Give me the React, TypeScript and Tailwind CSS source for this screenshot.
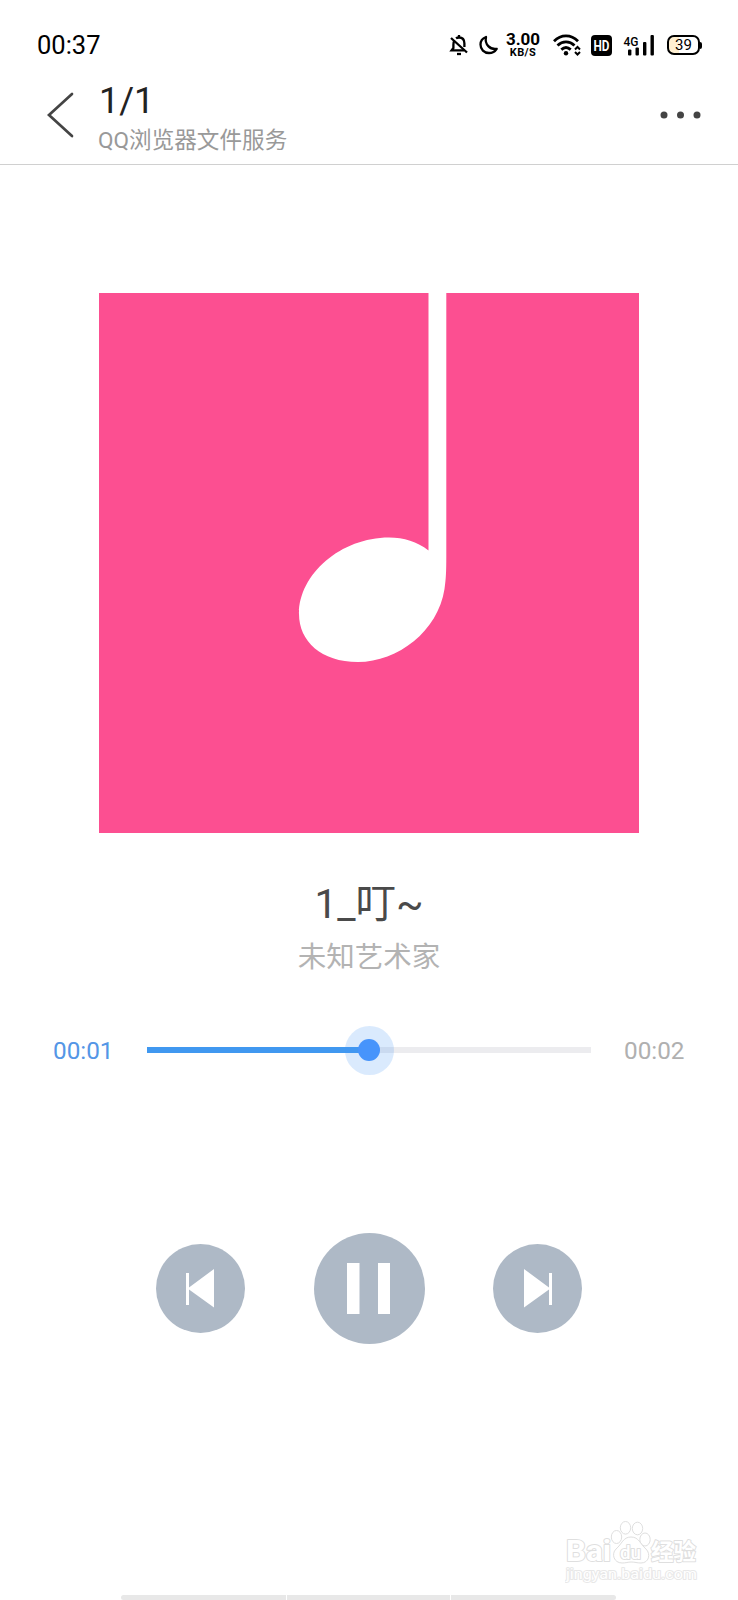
import React from "react";

function StatusBar() {
  return (
    <div className="flex h-[76px] items-start justify-between pl-[37px] pr-[36px] pt-[30px] text-black">
      <span className="text-[25.5px] leading-[30px]">00:37</span>
      <div className="flex h-[30px] items-center">
        <svg width="20" height="22" viewBox="0 0 20 22" fill="none" stroke="currentColor" strokeWidth="2.3">
          <path d="M5.5 6.4C4.7 7.5 4.4 9 4.4 10.8V14L2.6 16.4H15" />
          <path d="M7 4.4C7.8 3.8 8.8 3.5 10 3.5C13.5 3.5 15.4 6 15.4 9.5V13" />
          <path d="M10 1V4M2 4L18 18.5" />
          <path d="M8 20H12" />
        </svg>
        <svg className="ml-[10px]" width="20" height="20" viewBox="0 0 20 20" fill="none" stroke="currentColor" strokeWidth="2.3" strokeLinejoin="round">
          <path d="M7 2C3.5 3.3 1.5 6 1.5 9.5C1.5 14.5 5 18 10 18C13.5 18 16 16.5 17.7 13.8C11 14.8 5.5 9.5 7 2Z" />
        </svg>
        <div className="ml-[7px] flex w-[34px] flex-col items-center font-bold">
          <span className="text-[17px] leading-[15px]">3.00</span>
          <span className="text-[11px] leading-[11px] tracking-[0.4px]">KB/S</span>
        </div>
        <svg className="ml-[13px]" width="28" height="22" viewBox="0 0 28 22" fill="none" stroke="currentColor" strokeWidth="2.8">
          <path d="M1 7.2C8 .2 18 .2 25 7.2M4.5 11.5C9.5 6.7 16.5 6.7 21.5 11.5M8.3 15.6C11.2 13 14.8 13 17.7 15.6" />
          <circle cx="13" cy="19.2" r="2.2" fill="currentColor" stroke="none" />
          <path d="M22 15.5L24.5 13L27 15.5M22 18L24.5 20.5L27 18" strokeWidth="2" />
        </svg>
        <svg className="ml-[10px]" width="21" height="21" viewBox="0 0 21 21">
          <rect width="21" height="21" rx="4" fill="#000" />
          <text x="2.5" y="15.6" fontSize="14" fontWeight="700" fill="#fff" textLength="16" lengthAdjust="spacingAndGlyphs">HD</text>
        </svg>
        <svg className="ml-[12px] overflow-visible" width="32" height="22" viewBox="0 0 32 22" fill="currentColor">
          <text x="-0.5" y="11.5" fontSize="12.8" fontWeight="500" textLength="15" lengthAdjust="spacingAndGlyphs">4G</text>
          <rect x="4" y="15.5" width="3.4" height="6" rx="1" />
          <rect x="11.5" y="13.5" width="3.4" height="8" rx="1" />
          <rect x="19" y="8" width="3.4" height="13.5" rx="1" />
          <rect x="26.5" y="1" width="3.4" height="20.5" rx="1" />
        </svg>
        <div className="ml-[11px] flex items-center">
          <div className="flex h-[20px] w-[33px] items-center justify-center rounded-[7px] border-2 border-black bg-linear-to-r from-[#fff0d2] from-35% to-white to-35% pt-px text-[15px] leading-none">39</div>
          <div className="h-[7px] w-[2px] rounded-r-sm bg-black" />
        </div>
      </div>
    </div>
  );
}

function Header() {
  return (
    <header className="flex h-[89px] border-b border-[#d0d0d0] pl-[46px] pr-[37px]">
      <svg className="mt-[15px]" width="30" height="48" viewBox="0 0 30 48" fill="none" stroke="#444" strokeWidth="2.7" strokeLinecap="round">
        <path d="M26 3L3 24L26 45" />
      </svg>
      <div className="ml-[22px] flex flex-1 flex-col">
        <h1 className="ml-px mt-[4px] text-[36px] leading-[42px] text-[#222]">1/1</h1>
        <p className="mt-[4px] text-[22.6px] leading-[30px] text-[#999]">QQ浏览器文件服务</p>
      </div>
      <svg className="mt-[35px]" width="41" height="8" viewBox="0 0 41 8" fill="#444">
        <circle cx="4" cy="4" r="3.5" />
        <circle cx="20.5" cy="4" r="3.5" />
        <circle cx="37" cy="4" r="3.5" />
      </svg>
    </header>
  );
}

function Watermark() {
  return (
    <svg className="ml-auto mr-[35px]" width="138" height="66" viewBox="0 0 138 66" fill="#fff" stroke="#dfdfdf" strokeWidth="1">
      <ellipse cx="51.5" cy="16" rx="5.2" ry="6.5" />
      <ellipse cx="60.5" cy="6.8" rx="5.2" ry="6.3" />
      <ellipse cx="72.5" cy="7.5" rx="5.2" ry="6.3" />
      <ellipse cx="80" cy="18.5" rx="5.2" ry="6.5" />
      <path d="M66 16C58 16 57 23 51 28C46 33 49 42 57 42C61 42 63 41 66 41C70 41 72 42 76 42C84 42 86 33 81 28C75 23 74 16 66 16Z" />
      <g strokeWidth="2" paintOrder="stroke" strokeLinejoin="round">
        <text x="1" y="40" fontSize="29" fontWeight="700" textLength="45" lengthAdjust="spacingAndGlyphs">Bai</text>
        <text x="55" y="37.5" fontSize="18" fontWeight="500" textLength="21" lengthAdjust="spacingAndGlyphs">du</text>
        <text x="86" y="39" fontSize="23" fontWeight="700" textLength="45" lengthAdjust="spacingAndGlyphs">经验</text>
        <text x="1" y="58" fontSize="15.5" stroke="#e8e8e8" textLength="131" lengthAdjust="spacingAndGlyphs">jingyan.baidu.com</text>
      </g>
    </svg>
  );
}

export default function App() {
  return (
    <div className="flex h-[1600px] w-[738px] flex-col overflow-hidden bg-white font-['Roboto','Noto_Sans_CJK_SC',sans-serif]">
      <StatusBar />
      <Header />
      <main className="flex flex-col items-center">
        <svg className="mt-[128px]" width="540" height="540" viewBox="0 0 540 540">
          <rect width="540" height="540" fill="#fc4f91" />
          <path fill="#fff" d="M329.5 0H347.3V264C347.3 278 347 286 345.5 296C339 338 299 369 259 369C222 369 200 348 200 321C200 281 242 244.5 290 244.5C305 244.5 318 248.5 329.5 257.5Z" />
        </svg>
        <h2 className="mt-[46px] text-[40.5px] leading-[50px] text-[#4a4a4a]">1_叮~</h2>
        <p className="mt-[9px] text-[28.5px] leading-[40px] text-[#b3b3b3]">未知艺术家</p>
        <div className="mt-[47px] flex h-[50px] w-full items-center">
          <span className="ml-[53px] w-[94px] pt-[2px] text-[24.3px] leading-[30px] text-[#5496e6]">00:01</span>
          <div className="flex h-[6px] w-[444px] items-center bg-[#ececef]">
            <div className="h-[6px] w-1/2 bg-[#4098f0]" />
            <div className="-ml-[24.5px] flex size-[49px] shrink-0 items-center justify-center rounded-full bg-[#4598f5]/20">
              <div className="size-[22px] rounded-full bg-[#4794fb]" />
            </div>
          </div>
          <span className="ml-[33px] pt-[2px] text-[24.3px] leading-[30px] text-[#b0b0b0]">00:02</span>
        </div>
        <div className="mt-[158px] flex items-center gap-[68.5px]">
          <svg width="89" height="89" viewBox="0 0 89 89">
            <circle cx="44.5" cy="44.5" r="44.5" fill="#aeb9c6" />
            <path fill="#fff" d="M30 29H33V43.5L58 25V63.5L33 45.5V61H30Z" />
          </svg>
          <svg width="111" height="111" viewBox="0 0 111 111">
            <circle cx="55.5" cy="55.5" r="55.5" fill="#aeb9c6" />
            <path fill="#fff" d="M33 30H45.5V81H33ZM64 30H76V81H64Z" />
          </svg>
          <svg width="89" height="89" viewBox="0 0 89 89">
            <circle cx="44.5" cy="44.5" r="44.5" fill="#aeb9c6" />
            <path fill="#fff" d="M31 25L56 43.5V29H59V61H56V45.5L31 63.5Z" />
          </svg>
        </div>
      </main>
      <footer className="mt-auto flex flex-col">
        <Watermark />
        <div className="mt-[8px] flex h-[5px] gap-[1px] pl-[121px]">
          <div className="w-[165px] rounded-l-full bg-[#e8e8e8]" />
          <div className="w-[163px] bg-[#e8e8e8]" />
          <div className="w-[165px] rounded-r-full bg-[#e8e8e8]" />
        </div>
      </footer>
    </div>
  );
}
